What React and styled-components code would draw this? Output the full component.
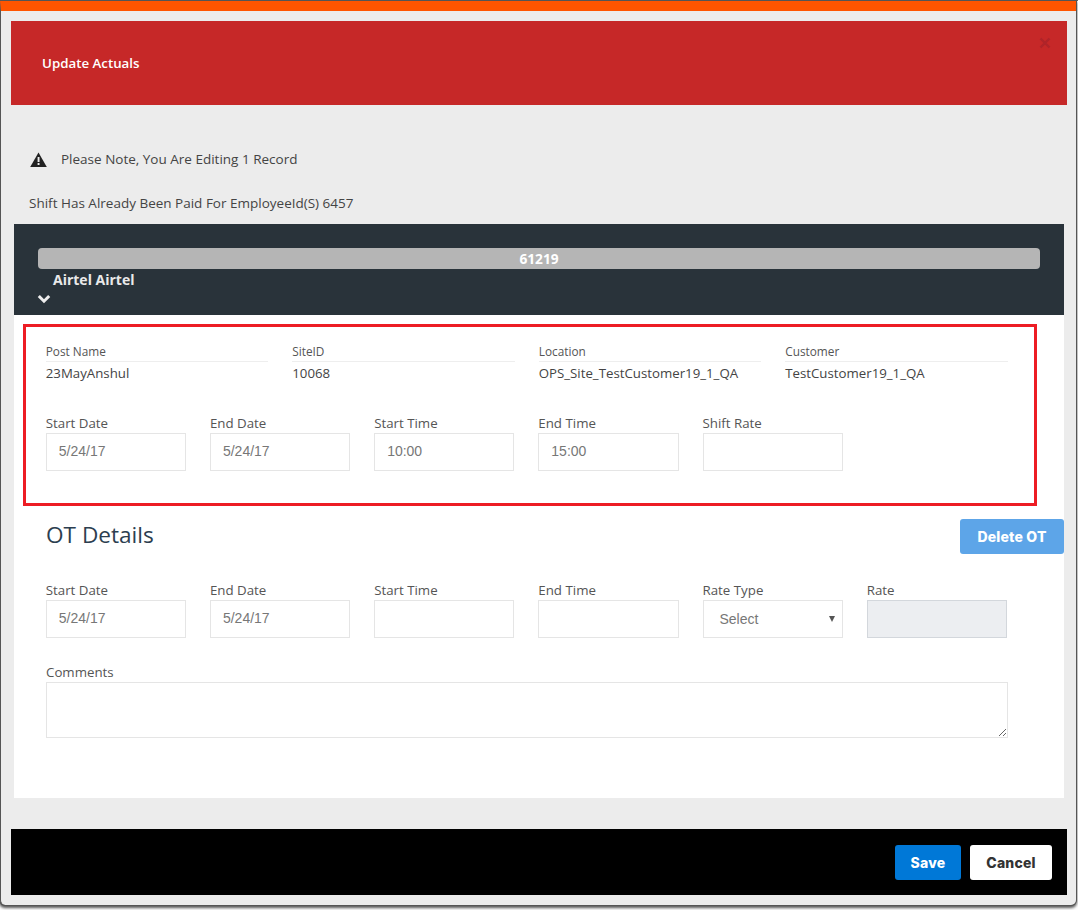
import React from "react";
import styled, { createGlobalStyle } from "styled-components";

const Global = createGlobalStyle`
  html, body { margin: 0; padding: 0; background: #fff; }
  body { font-family: "Open Sans", "Noto Sans", sans-serif; width: 1078px; height: 910px; overflow: hidden; }
`;
const Backdrop = styled.div`
  width: 1078px; height: 910px; background: #fff; box-sizing: border-box;
  border-top: 1px solid #666;
`;
const Modal = styled.div`
  width: 1076px; height: 904px; box-sizing: border-box; background: #ececec;
  border-top: 10px solid #ff5500; border-radius: 0 0 5px 5px;
  box-shadow: 0 0 0 1px #555, 0 2px 3px 1px #555;
  padding: 10px 10px 0 10px;
  border-left: 1px solid #555;
`;
const Header = styled.div`
  height: 84px; width: 1056px; box-sizing: border-box; background: #c62828;
  display: flex; align-items: center; justify-content: space-between;
  padding: 0 16px 0 31px;
`;
const Title = styled.h4`
  margin: 0; font-size: 13.3px; font-weight: 600; color: #fff; line-height: 20px;
`;
const Close = styled.span`
  align-self: flex-start; margin-top: 16px; display: block; line-height: 0; opacity: .75;
`;
const Notice = styled.div`
  display: flex; align-items: center; gap: 14px; margin: 44px 0 0 19px; height: 20px;
  font-size: 13.5px; color: #444;
`;
const PaidLine = styled.div`
  margin: 24px 0 0 18px; height: 20px; line-height: 20px; font-size: 13.5px; color: #444;
`;
const Sheet = styled.div`
  width: 1050px; margin: 11px 0 0 3px;
`;
const Band = styled.div`
  height: 91px; background: #29333a; box-sizing: border-box; padding: 24px 24px 0 24px; color: #e9e9e9;
`;
const Meter = styled.div`
  height: 21px; line-height: 22px; border-radius: 4px; background: #b5b5b5; text-align: center;
  color: #fff; font-size: 13.7px; font-weight: 700;
`;
const Person = styled.div`
  margin: 1px 0 0 15px; font-size: 14px; line-height: 20px; font-weight: 700;
`;
const Chevron = styled.span`
  display: block; line-height: 0; margin: 4px 0 0 -1px;
`;
const Card = styled.div`
  background: #fff; height: 483px; box-sizing: border-box; padding: 9px 27px 0 9px;
`;
const Highlight = styled.div`
  width: 1014px; height: 182px; box-sizing: border-box; border: 3px solid #ed1c24;
  padding: 17px 26px 0 20px;
`;
const InfoRow = styled.div`
  display: grid; grid-template-columns: repeat(4, 222.5px); column-gap: 24px; margin-left: -.25px;
`;
const InfoLabel = styled.div`
  font-size: 11.8px; line-height: 15px; color: #555; border-bottom: 1px solid #eee; padding-bottom: 2px;
`;
const InfoValue = styled.div`
  font-size: 13.25px; line-height: 18px; margin-top: 2px; color: #444;
`;
const FieldRow = styled.div`
  display: grid; grid-template-columns: repeat(6, 140.2px); column-gap: 24px; margin: ${(p) => p.$top}px 0 0 -.25px;
`;
const Field = styled.label`
  display: block; font-size: 13.3px; line-height: 16px; color: #555;
`;
const fieldBox = `
  display: block; width: 100%; height: 38px; box-sizing: border-box; margin-top: 2px;
  border: 1px solid #e5e5e5; background: #fff; padding: 0 12px 2px; outline: none; border-radius: 0;
  font: 14px "Liberation Sans", Arial, sans-serif; color: #777;
`;
const Input = styled.input`
  ${fieldBox}
  ${(p) => (p.disabled ? "background: #eceef1; border-color: #d3d7dc;" : "")}
`;
const SelectBox = styled.div`
  ${fieldBox}
  display: flex; align-items: center; justify-content: space-between; padding: 0 7px 0 16px;
`;
const Caret = styled.span`
  width: 0; height: 0; border-left: 3px solid transparent; border-right: 3px solid transparent;
  border-top: 6px solid #555;
`;
const OtHead = styled.div`
  display: flex; justify-content: space-between; align-items: flex-start; margin: 13px -27px 0 0; height: 35px;
  padding-left: 23px;
`;
const OtTitle = styled.h3`
  margin: 0; font-size: 22.6px; font-weight: 400; color: #2c3e50; line-height: 32px;
`;
const Btn = styled.button`
  font-family: Inter, "Liberation Sans", sans-serif; font-weight: 800; font-size: 14px; letter-spacing: .2px;
  border: 0; border-radius: 3px;
  height: 35px; width: ${(p) => p.$w}px; padding: 0; color: ${(p) => p.$fg}; background: ${(p) => p.$bg};
`;
const OtBody = styled.div`
  padding-left: 23px; width: 962px;
`;
const Comments = styled.textarea`
  display: block; width: 962px; height: 56px; box-sizing: border-box; margin: 2px 0 0 0; border: 1px solid #e5e5e5;
  outline: none; background: #fff; padding: 6px 12px;
`;
const CommentBlock = styled.label`
  display: block; font-size: 13.3px; line-height: 16px; color: #555; margin-top: 26px;
`;
const Footer = styled.div`
  width: 1056px; height: 66px; margin-top: 31px; background: #000; display: flex; justify-content: flex-end;
  align-items: center; gap: 9px; padding-right: 15px; box-sizing: border-box;
`;

const info = [
  ["Post Name", "23MayAnshul"],
  ["SiteID", "10068"],
  ["Location", "OPS_Site_TestCustomer19_1_QA"],
  ["Customer", "TestCustomer19_1_QA"],
];
const shift = [
  ["Start Date", "5/24/17"],
  ["End Date", "5/24/17"],
  ["Start Time", "10:00"],
  ["End Time", "15:00"],
  ["Shift Rate", ""],
];
const ot = [
  ["Start Date", "5/24/17"],
  ["End Date", "5/24/17"],
  ["Start Time", ""],
  ["End Time", ""],
];

export default function App() {
  return (
    <Backdrop>
      <Global />
      <Modal>
        <Header>
          <Title>Update Actuals</Title>
          <Close>
            <svg width="12" height="12" viewBox="0 0 12 12">
              <path d="M1.5 1.5 10.5 10.5M10.5 1.5 1.5 10.5" stroke="#a8232a" strokeWidth="2.4" fill="none" />
            </svg>
          </Close>
        </Header>
        <Notice>
          <svg width="17" height="15" viewBox="0 0 17 15">
            <path d="M8.5 0.5 16.8 15H0.2Z" fill="#222" />
            <rect x="7.6" y="5" width="1.9" height="5" fill="#ececec" />
            <rect x="7.6" y="11" width="1.9" height="2" fill="#ececec" />
          </svg>
          <span>Please Note, You Are Editing 1 Record</span>
        </Notice>
        <PaidLine>Shift Has Already Been Paid For EmployeeId(S) 6457</PaidLine>
        <Sheet>
          <Band>
            <Meter>61219</Meter>
            <Person>Airtel Airtel</Person>
            <Chevron>
              <svg width="14" height="10" viewBox="0 0 14 10">
                <path d="M1.8 2 7 7.2 12.2 2" stroke="#eee" strokeWidth="3" fill="none" />
              </svg>
            </Chevron>
          </Band>
          <Card>
            <Highlight>
              <InfoRow>
                {info.map(([l, v]) => (
                  <div key={l}>
                    <InfoLabel>{l}</InfoLabel>
                    <InfoValue>{v}</InfoValue>
                  </div>
                ))}
              </InfoRow>
              <FieldRow $top={33}>
                {shift.map(([l, v]) => (
                  <Field key={l}>
                    {l}
                    <Input readOnly defaultValue={v} />
                  </Field>
                ))}
              </FieldRow>
            </Highlight>
            <OtHead>
              <OtTitle>OT Details</OtTitle>
              <Btn $w={104} $bg="#5da5e8" $fg="#fff">Delete OT</Btn>
            </OtHead>
            <OtBody>
              <FieldRow $top={28}>
                {ot.map(([l, v]) => (
                  <Field key={l}>
                    {l}
                    <Input readOnly defaultValue={v} />
                  </Field>
                ))}
                <Field>
                  Rate Type
                  <SelectBox>
                    Select
                    <Caret />
                  </SelectBox>
                </Field>
                <Field>
                  Rate
                  <Input disabled />
                </Field>
              </FieldRow>
              <CommentBlock>
                Comments
                <Comments />
              </CommentBlock>
            </OtBody>
          </Card>
        </Sheet>
        <Footer>
          <Btn $w={66} $bg="#0078d7" $fg="#fff">Save</Btn>
          <Btn $w={82} $bg="#fff" $fg="#333">Cancel</Btn>
        </Footer>
      </Modal>
    </Backdrop>
  );
}
